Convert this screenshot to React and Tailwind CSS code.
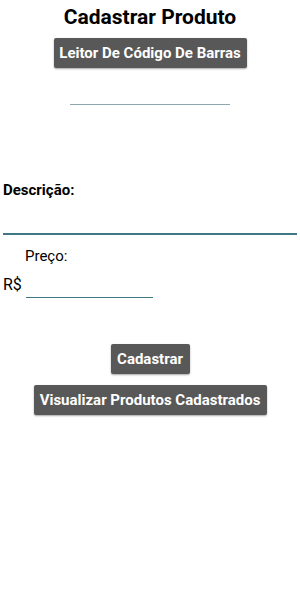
export default function App() {
  const btn =
    "bg-[#585858] text-white font-bold text-[15px] leading-none rounded-[2px] shadow-[0_1px_2px_rgba(0,0,0,0.35)] h-[30px] px-[6px] flex items-center justify-center whitespace-nowrap";
  return (
    <div className="w-[300px] h-[600px] bg-white text-black flex flex-col" style={{ fontFamily: "Roboto, 'Noto Sans', sans-serif" }}>
      <div className="flex flex-col items-center">
        <h1 className="text-[21px] font-bold leading-none mt-[7px]">Cadastrar Produto</h1>
        <button className={btn + " mt-[10px] w-[193px]"}>Leitor De Código De Barras</button>
        <div className="mt-[36px] w-[160px] h-[1px] bg-[#8fa8ad]"></div>
      </div>
      <div className="mt-[78px] pl-[3px] text-[15px] font-bold leading-none">Descrição:</div>
      <div className="mt-[35px] mx-[3px] h-[1.5px] bg-[#3f7785]"></div>
      <div className="mt-[14px] pl-[25px] text-[15px] leading-none">Preço:</div>
      <div className="mt-[13px] flex items-end">
        <span className="pl-[3px] text-[16px] leading-none">R$</span>
      </div>
      <div className="mt-[4px] ml-[26px] w-[127px] h-[1.5px] bg-[#3f7785]"></div>
      <div className="flex flex-col items-center">
        <button className={btn + " mt-[46px] w-[79px]"}>Cadastrar</button>
        <button className={btn + " mt-[11px] w-[233px]"}>Visualizar Produtos Cadastrados</button>
      </div>
    </div>
  );
}
